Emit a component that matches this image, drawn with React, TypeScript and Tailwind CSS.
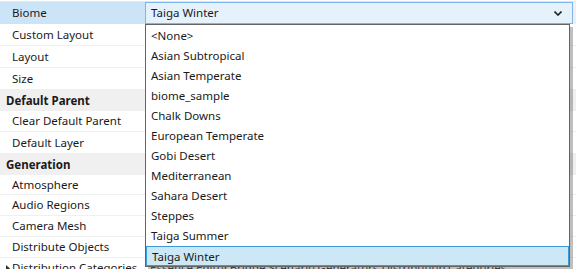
import React from 'react';

type Row = { label: string; h: string; header?: boolean; value?: string; expander?: boolean };

const rows: Row[] = [
  { label: 'Custom Layout', h: 'h-[22px]' },
  { label: 'Layout', h: 'h-[22px]' },
  { label: 'Size', h: 'h-[22px]' },
  { label: 'Default Parent', h: 'h-[21px]', header: true },
  { label: 'Clear Default Parent', h: 'h-[21px]' },
  { label: 'Default Layer', h: 'h-[22px]' },
  { label: 'Generation', h: 'h-[21px]', header: true },
  { label: 'Atmosphere', h: 'h-[20px]' },
  { label: 'Audio Regions', h: 'h-[21px]' },
  { label: 'Camera Mesh', h: 'h-[21px]' },
  { label: 'Distribute Objects', h: 'h-[21px]' },
  { label: 'Distribution Categories', h: 'h-[21px]', expander: true, value: 'Essence.Editor.Bridge.Scenario.Generators.Distribution.Categories' },
];

const biomes = [
  '<None>',
  'Asian Subtropical',
  'Asian Temperate',
  'biome_sample',
  'Chalk Downs',
  'European Temperate',
  'Gobi Desert',
  'Mediterranean',
  'Sahara Desert',
  'Steppes',
  'Taiga Summer',
  'Taiga Winter',
];

export default function App() {
  const selected = 'Taiga Winter';

  return (
    <div className="relative h-[269px] w-[576px] overflow-hidden bg-white text-[11.5px] text-[#1a1a1a] [font-family:'Noto_Sans',sans-serif]">
      <div className="h-[2px] border-b border-[#e6e6e6]"></div>

      {/* selected property row */}
      <div className="flex h-[22px]">
        <div className="flex w-[145px] items-center bg-[#cce4f7] pl-[12px]">Biome</div>
        <div className="flex flex-1 items-center justify-between border border-[#7eb4ea] bg-[#e5f1fb] pl-[5px] pr-[10px]">
          <span>Taiga Winter</span>
          <svg width="8" height="5" viewBox="0 0 8 5">
            <path d="M0.5 0.5 L4 4 L7.5 0.5" stroke="#222" strokeWidth="1.6" fill="none" />
          </svg>
        </div>
        <div className="w-[3px] bg-[#f0f0f0]"></div>
      </div>

      {rows.map(r => (
        <div key={r.label} className={`flex ${r.h} ${r.header ? 'bg-[#f0f0f0]' : 'border-b border-[#f0f0f0]'}`}>
          <div className={`flex w-[145px] shrink-0 items-center overflow-hidden ${r.header ? 'pl-[6px] font-bold' : 'pl-[12px]'}`}>
            {r.expander && (
              <svg width="4" height="7" viewBox="0 0 4 7" className="-ml-[6px] mr-[2px] shrink-0">
                <path d="M0 0 L4 3.5 L0 7 Z" fill="#333" />
              </svg>
            )}
            <span className="whitespace-nowrap">{r.label}</span>
          </div>
          <div className="flex min-w-0 flex-1 items-center overflow-hidden whitespace-nowrap pl-[5px] text-[#555]">
            {r.value}
          </div>
        </div>
      ))}

      {/* open dropdown list */}
      <div className="absolute left-[145px] top-[24px] w-[425px] border border-[#646464] bg-white shadow-[3px_3px_0_rgba(0,0,0,0.25)]">
        {biomes.map(b => (
          <div
            key={b}
            className={`flex h-[20px] items-center pl-[5px] pt-[2px] ${b === selected ? 'mt-[1px] h-[19px] border border-[#3d9ad8] bg-[#cce8f6] pl-[4px] pt-[1px]' : ''}`}
          >
            {b}
          </div>
        ))}
      </div>
    </div>
  );
}
